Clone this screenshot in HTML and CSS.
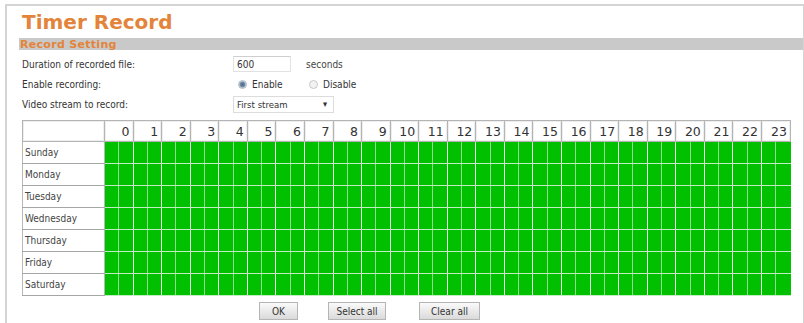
FILE: index.html
```html
<!DOCTYPE html>
<html>
<head>
    <title>Timer Record</title>
    <meta charset="utf-8">
    <link rel="stylesheet" href="styles.css">
</head>
<body>
<div class="frame">
    <h1 class="title">Timer Record</h1>
    <div class="section">Record Setting</div>

    <div class="form">
        <div class="row">
            <span class="label">Duration of recorded file:</span>
            <input class="text" type="text" value="600">
            <span class="unit">seconds</span>
        </div>
        <div class="row">
            <span class="label">Enable recording:</span>
            <label class="radio"><span class="dot on"></span>Enable</label>
            <label class="radio"><span class="dot"></span>Disable</label>
        </div>
        <div class="row">
            <span class="label">Video stream to record:</span>
            <span class="select">First stream<span class="arrow">&#9662;</span></span>
        </div>
    </div>

    <table class="schedule" id="schedule">
        <thead>
            <tr id="hours"><th class="corner"></th></tr>
        </thead>
        <tbody id="days"></tbody>
    </table>

    <div class="buttons">
        <button class="btn ok">OK</button>
        <button class="btn sel">Select all</button>
        <button class="btn clr">Clear all</button>
    </div>
</div>

<script src="grid.js"></script>
</body>
</html>
```

FILE: grid.js
```js
var days = ['Sunday', 'Monday', 'Tuesday', 'Wednesday', 'Thursday', 'Friday', 'Saturday'];

var hoursRow = document.getElementById('hours');
for (var h = 0; h < 24; h++) {
    var th = document.createElement('th');
    th.colSpan = 2;
    th.innerHTML = h;
    hoursRow.appendChild(th);
}

var body = document.getElementById('days');
for (var d = 0; d < days.length; d++) {
    var html = '<td class="day">' + days[d] + '</td>';
    for (var i = 0; i < 48; i++) {
        html += '<td class="slot' + (i % 2 ? ' half' : '') + '"></td>';
    }
    var tr = document.createElement('tr');
    tr.innerHTML = html;
    body.appendChild(tr);
}
```

FILE: styles.css
```css
body {
    margin: 0;
    padding: 0;
    background: #fff;
    color: #333;
    font: 10px "DejaVu Sans Condensed", "DejaVu Sans", sans-serif;
    overflow: hidden;
}

.frame {
    margin: 4px 0 0 5px;
    height: 340px;
    border: 2px solid #d4d4d4;
    border-bottom: none;
    border-right-width: 1px;
    padding-left: 12px;
}

.title {
    margin: 0;
    padding: 4px 0 0 3px;
    height: 28px;
    font: bold 20px "DejaVu Sans", sans-serif;
    color: #e3843a;
    line-height: 24px;
}

.section {
    background: #c9c9c9;
    height: 12px;
    line-height: 12px;
    padding-left: 1px;
    color: #e3843a;
    font: bold 11px "DejaVu Sans", sans-serif;
    letter-spacing: 0.3px;
}

.form {
    padding: 4px 0 0 3px;
}

.row {
    display: flex;
    align-items: center;
    height: 20px;
}

.label {
    width: 211px;
}

.text {
    width: 50px;
    height: 14px;
    padding: 0 3px;
    border: 1px solid #e2e2e2;
    border-top-color: #cfcfcf;
    font: 10px "DejaVu Sans Condensed", "DejaVu Sans", sans-serif;
    color: #333;
    outline: none;
}

.unit {
    margin-left: 15px;
    color: #444;
}

.radio {
    display: flex;
    align-items: center;
    margin-left: 5px;
    width: 66px;
}

.dot {
    width: 7px;
    height: 7px;
    border: 1px solid #c8c8c8;
    border-radius: 50%;
    background: #f2f2f2;
    margin-right: 5px;
}

.dot.on {
    background: radial-gradient(circle, #4a6888 0, #6d89a6 45%, #dde3ea 75%);
    border-color: #b0b8c4;
}

.select {
    display: flex;
    align-items: center;
    justify-content: space-between;
    width: 90px;
    height: 15px;
    padding: 0 6px 0 3px;
    border: 1px solid #dcdcdc;
    font-size: 9.5px;
}

.arrow {
    font-size: 9px;
    color: #333;
}

.schedule {
    margin: 6px 0 0 3px;
    width: 769px;
    border-collapse: collapse;
    table-layout: fixed;
}

.schedule th {
    height: 20px;
    padding: 0 3px 0 0;
    border: 1px solid #b4b4b4;
    box-shadow: inset 0 0 0 1px #eee;
    text-align: right;
    font: normal 12.5px "DejaVu Sans", sans-serif;
    color: #333;
    background: #fff;
}

.schedule th.corner {
    width: 78px;
}

.schedule td {
    height: 20px;
    padding: 0;
}

.schedule td.day {
    height: 21px;
    padding-left: 2px;
    border-left: 1px solid #b8b8b8;
    border-bottom: 1px solid #a6a6a6;
    border-right: 1px solid #b8b8b8;
    color: #444;
    font-size: 10px;
}

.schedule td.slot {
    background: #00c000;
    border-top: 1px solid #c2ecc2;
    border-bottom: 1px solid #c2ecc2;
    border-left: 1px solid #eaf9ea;
}

.schedule td.half {
    border-left: 1px solid #8fdc8f;
}

.buttons {
    display: flex;
    gap: 30px;
    padding: 6px 0 0 240px;
}

.btn {
    height: 18px;
    padding: 0;
    border: 1px solid #b5b5b5;
    background: linear-gradient(#fafafa, #dadada);
    font: 10px "DejaVu Sans Condensed", "DejaVu Sans", sans-serif;
    color: #333;
}

.btn.ok {
    width: 39px;
}

.btn.sel {
    width: 58px;
}

.btn.clr {
    width: 61px;
    margin-left: 3px;
}
```
